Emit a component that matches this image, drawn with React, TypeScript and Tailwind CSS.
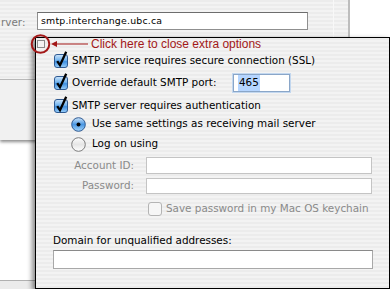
import { useId } from 'react';

const stripes =
  'bg-[repeating-linear-gradient(180deg,#ececec_0px,#ececec_2px,#f3f3f3_2px,#f3f3f3_4px)]';

function AquaCheck({ checked = true, disabled = false }: { checked?: boolean; disabled?: boolean }) {
  const id = useId();
  if (!checked) {
    return (
      <svg width="16" height="16" viewBox="0 0 16 16" className="shrink-0">
        <rect x="1.5" y="1.5" width="13" height="13" rx="2.5" fill="#f6f6f6" stroke={disabled ? '#b4b4b4' : '#8a8a8a'} />
      </svg>
    );
  }
  return (
    <svg width="16" height="16" viewBox="0 0 16 16" className="shrink-0 overflow-visible">
      <defs>
        <linearGradient id={id} x1="0" y1="0" x2="0" y2="1">
          <stop offset="0" stopColor="#cfe6fb" />
          <stop offset="0.45" stopColor="#6fb2ee" />
          <stop offset="0.55" stopColor="#3f8fe0" />
          <stop offset="1" stopColor="#9bd0fb" />
        </linearGradient>
      </defs>
      <rect x="1.5" y="1.5" width="13" height="13" rx="2.5" fill={`url(#${id})`} stroke="#2f5a92" />
      <path d="M4.2 8.2 L7 12.2 L13.2 -1.2" fill="none" stroke="#000" strokeWidth="2.3" strokeLinejoin="miter" />
    </svg>
  );
}

function AquaRadio({ on = false }: { on?: boolean }) {
  const id = useId();
  return (
    <svg width="15" height="15" viewBox="0 0 15 15" className="shrink-0">
      <defs>
        <linearGradient id={id} x1="0" y1="0" x2="0" y2="1">
          {on ? (
            <>
              <stop offset="0" stopColor="#cfe6fb" />
              <stop offset="0.5" stopColor="#4a97e3" />
              <stop offset="1" stopColor="#a6d6fc" />
            </>
          ) : (
            <>
              <stop offset="0" stopColor="#fdfdfd" />
              <stop offset="0.5" stopColor="#e6e6e6" />
              <stop offset="1" stopColor="#ffffff" />
            </>
          )}
        </linearGradient>
      </defs>
      <circle cx="7.5" cy="7.5" r="6.8" fill={`url(#${id})`} stroke={on ? '#2f5a92' : '#7c7c7c'} />
      {on && <circle cx="7.5" cy="7.5" r="2" fill="#000" />}
    </svg>
  );
}

export default function App() {
  return (
    <div className="relative w-[390px] h-[289px] overflow-hidden bg-white font-['DejaVu_Sans',sans-serif] text-[10.4px] text-black">
      {/* background window */}
      <div className="flex h-[140px]">
        <div className="flex w-[333px] flex-col shadow-[0_2px_3px_rgba(0,0,0,0.45)]">
          <div className={`flex h-[79px] items-start ${stripes}`}>
            <span className="mt-[15px] w-[37px] shrink-0 pl-[1px] text-[10.4px] text-[#7a7a7a]">rver:</span>
            <div className="mt-[12px] flex h-[18px] w-[271px] items-center border border-[#8f8f8f] border-t-[#6d6d6d] bg-white pl-[3px] text-[9.4px] tracking-[0.2px]">
              smtp.interchange.ubc.ca
            </div>
          </div>
          <div className="h-[61px] border-t border-[#b9b9b9] bg-[#f1f1f1]" />
        </div>
        <div className={`h-[40px] w-[17px] border-l border-r-2 border-l-[#f8f8f8] border-r-[#bdbdbd] ${stripes}`} />
      </div>
      <div className="mt-[140px] h-[9px] border-t border-[#b0b0b0] bg-[#ebebeb]" />

      {/* options sheet */}
      <div
        className={`absolute left-[35px] top-[37px] h-[252px] w-[355px] border border-black ${stripes} shadow-[-3px_2px_5px_rgba(0,0,0,0.45)]`}
      >
        <div className="flex flex-col">
          <div className="mt-[14px] flex h-[18px] items-center gap-[3px] pl-[17px]">
            <AquaCheck />
            <span>SMTP service requires secure connection (SSL)</span>
          </div>
          <div className="mt-[4px] flex h-[18px] items-center pl-[17px]">
            <AquaCheck />
            <span className="ml-[3px] w-[161px]">Override default SMTP port:</span>
            <div className="flex h-[18px] w-[57px] items-center border border-[#8aa6c8] bg-white pl-[4px] shadow-[0_0_0_1px_#c2d7ef]">
              <span className="bg-[#b5d5ff] px-[1px]">465</span>
            </div>
          </div>
          <div className="mt-[5px] flex h-[18px] items-center gap-[3px] pl-[17px]">
            <AquaCheck />
            <span>SMTP server requires authentication</span>
          </div>
          <div className="flex h-[18px] items-center gap-[6px] pl-[35px]">
            <AquaRadio on />
            <span>Use same settings as receiving mail server</span>
          </div>
          <div className="mt-[2px] flex h-[18px] items-center gap-[6px] pl-[35px]">
            <AquaRadio />
            <span>Log on using</span>
          </div>
          <div className="mt-[4px] flex h-[17px] items-center">
            <span className="w-[98px] text-right text-[#8a8a8a]">Account ID:</span>
            <div className="ml-[12px] h-[17px] w-[226px] border border-[#c4c4c4] bg-white" />
          </div>
          <div className="mt-[4px] flex h-[16px] items-center">
            <span className="w-[98px] text-right text-[#8a8a8a]">Password:</span>
            <div className="ml-[12px] h-[16px] w-[226px] border border-[#c4c4c4] bg-white" />
          </div>
          <div className="mt-[6px] flex h-[18px] items-center gap-[3px] pl-[111px] text-[#8a8a8a]">
            <AquaCheck checked={false} disabled />
            <span>Save password in my Mac OS keychain</span>
          </div>
          <div className="mt-[15px] pl-[17px] leading-[14px]">Domain for unqualified addresses:</div>
          <div className="ml-[17px] mt-[3px] h-[19px] w-[320px] border border-[#a8a8a8] border-t-[#8a8a8a] bg-white" />
        </div>
      </div>

      {/* annotation */}
      <svg className="absolute left-0 top-0" width="100" height="60" viewBox="0 0 100 60">
        <rect x="37.5" y="40.5" width="7" height="7" fill="#f4f4f4" stroke="#8c8c8c" />
        <circle cx="40.5" cy="44" r="8.8" fill="none" stroke="#a31818" strokeWidth="2" />
        <line x1="55" y1="44" x2="88" y2="44" stroke="#a31818" strokeWidth="1.2" />
        <path d="M51 44 L57 41 L57 47 Z" fill="#a31818" />
      </svg>
      <span className="absolute left-[91px] top-[36px] font-['Liberation_Sans',Arial,sans-serif] text-[12px] leading-[16px] text-[#a31818]">
        Click here to close extra options
      </span>
    </div>
  );
}
